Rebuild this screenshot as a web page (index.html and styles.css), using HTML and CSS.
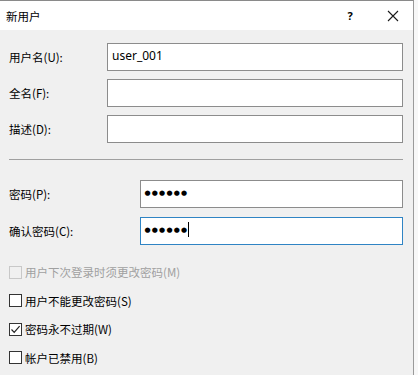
FILE: index.html
```html
<!DOCTYPE html>
<html lang="zh-CN">
<head>
<meta charset="utf-8">
<link rel="stylesheet" href="styles.css">
</head>
<body>
<div class="window">
  <div class="titlebar">
    <span class="title">新用户</span>
    <span class="help">?</span>
    <span class="close">
      <svg width="12" height="12" viewBox="0 0 12 12"><path d="M1 1 L11 11 M11 1 L1 11" stroke="#1a1a1a" stroke-width="1.1" fill="none"/></svg>
    </span>
  </div>
  <div class="content">
    <div class="group">
      <div class="row">
        <label class="lbl lbl-a">用户名(U):</label>
        <div class="box">user_001</div>
      </div>
      <div class="row">
        <label class="lbl lbl-a">全名(F):</label>
        <div class="box"></div>
      </div>
      <div class="row">
        <label class="lbl lbl-a">描述(D):</label>
        <div class="box"></div>
      </div>
    </div>
    <div class="sep"></div>
    <div class="group group-pw">
      <div class="row">
        <label class="lbl lbl-b">密码(P):</label>
        <div class="box"><span class="dots">●●●●●●</span></div>
      </div>
      <div class="row">
        <label class="lbl lbl-b">确认密码(C):</label>
        <div class="box focus"><span class="dots">●●●●●●</span><span class="caret"></span></div>
      </div>
    </div>
    <div class="checks">
      <div class="chk disabled"><span class="cb"></span><span>用户下次登录时须更改密码(M)</span></div>
      <div class="chk"><span class="cb"></span><span>用户不能更改密码(S)</span></div>
      <div class="chk"><span class="cb"><svg width="11" height="11" viewBox="0 0 11 11"><path d="M1.5 5.5 L4.2 8.3 L9.6 2.2" stroke="#222" stroke-width="1.2" fill="none"/></svg></span><span>密码永不过期(W)</span></div>
      <div class="chk"><span class="cb"></span><span>帐户已禁用(B)</span></div>
    </div>
  </div>
</div>
</body>
</html>
```
FILE: styles.css
```css
html, body {
  margin: 0;
  padding: 0;
  background: #f7f7f7;
}
body {
  font-family: "Noto Sans", "Noto Sans CJK SC", sans-serif;
  font-size: 12px;
  color: #000;
}
.window {
  width: 414px;
  height: 375px;
  background: #f0f0f0;
  border-right: 1px solid #9a9a9a;
  border-top: 1px solid #8a8a8a;
  box-sizing: border-box;
  overflow: hidden;
}
.titlebar {
  height: 29px;
  background: #fff;
  display: flex;
  align-items: center;
}
.title {
  font-family: "Noto Sans CJK SC", sans-serif;
  font-size: 11.5px;
  margin-left: 6px;
  flex: 1;
}
.help {
  font-family: "Noto Sans", sans-serif;
  font-weight: bold;
  font-size: 11px;
  width: 12px;
  text-align: center;
  margin-right: 31px;
}
.close {
  display: flex;
  width: 12px;
  margin-right: 14px;
}
.content {
  padding: 13px 10px 0 9px;
}
.group {
  display: flex;
  flex-direction: column;
  gap: 8px;
}
.row {
  display: flex;
  align-items: center;
  height: 28px;
}
.lbl {
  font-family: "Noto Sans CJK SC", sans-serif;
  font-size: 11.5px;
}
.lbl-a { width: 98px; }
.lbl-b { width: 130.5px; }
.box {
  flex: 1;
  height: 28px;
  box-sizing: border-box;
  border: 1px solid #8c8c8c;
  background: #fff;
  display: flex;
  align-items: center;
  padding: 0 0 3px 4px;
  font-family: "Noto Sans", sans-serif;
  font-size: 12px;
}
.box.focus {
  border-color: #2f84c4;
}
.dots {
  font-family: "DejaVu Sans", sans-serif;
  font-size: 7px;
  letter-spacing: 1.2px;
}
.caret {
  display: inline-block;
  width: 1px;
  height: 15px;
  background: #000;
}
.sep {
  height: 1px;
  background: #a0a0a0;
  margin: 16px 0 20px 0;
}
.group-pw {
  gap: 9px;
}
.checks {
  margin-top: 13px;
  display: flex;
  flex-direction: column;
}
.chk {
  height: 28.5px;
  display: flex;
  align-items: center;
  font-family: "Noto Sans CJK SC", sans-serif;
  font-size: 11.5px;
}
.cb {
  width: 13px;
  height: 13px;
  box-sizing: border-box;
  border: 1px solid #333;
  background: #fff;
  margin-right: 3px;
  display: flex;
  align-items: center;
  justify-content: center;
}
.chk.disabled {
  color: #a0a0a0;
}
.chk.disabled .cb {
  border-color: #c8c8c8;
  background: #f0f0f0;
}
```
